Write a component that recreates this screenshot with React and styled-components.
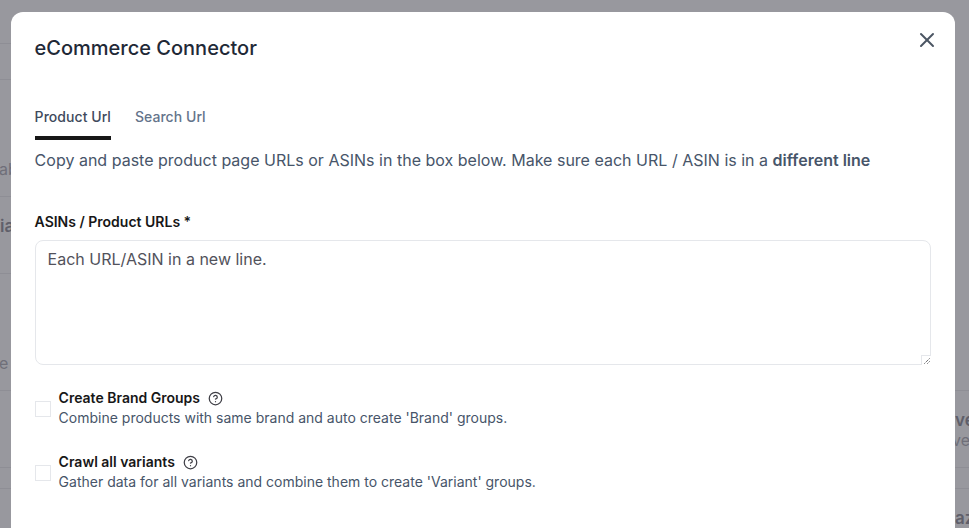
import React from 'react';
import styled, { createGlobalStyle } from 'styled-components';
import { X } from 'lucide-react';

const GlobalStyle = createGlobalStyle`
	html, body {
		margin: 0;
		height: 100%;
		overflow: hidden;
		font-family: 'Inter', 'Liberation Sans', sans-serif;
	}
	* {
		box-sizing: border-box;
	}
`;

const Page = styled.div`
	position: relative;
	width: 969px;
	height: 528px;
	overflow: hidden;
	background-color: #98989e;
`;

const Table = styled.div`
	display: flex;
	flex-direction: column;
`;

const Row = styled.div`
	display: flex;
	justify-content: space-between;
	height: ${props => props.height}px;
`;

const Edge = styled.div`
	width: ${props => (props.right ? 14 : 11)}px;
	padding-top: ${props => props.pad || 0}px;
	overflow: ${props => (props.right ? 'hidden' : 'visible')};
	border-bottom: 1px solid ${props => (props.ruled ? '#8e8e95' : 'transparent')};
	white-space: nowrap;
`;

const Strong = styled.div`
	font-size: 17px;
	line-height: 20px;
	font-weight: 600;
	color: #5f5f6a;
`;

const Faint = styled.div`
	margin-left: ${props => props.shift || 0}px;
	font-size: 16px;
	line-height: 20px;
	color: #6f6f79;
`;

const Modal = styled.div`
	position: absolute;
	left: 10.6px;
	top: 12px;
	width: 944.4px;
	height: 540px;
	background-color: white;
	border-radius: 12px;
	padding: 24px;
`;

const Title = styled.h2`
	margin: 0;
	font-size: 20px;
	line-height: 24px;
	font-weight: 500;
	color: #1f2937;
`;

const Close = styled.button`
	position: absolute;
	top: 16px;
	right: 16px;
	width: 24px;
	height: 24px;
	padding: 0;
	border: 0;
	background: none;
	color: #4b5563;
	display: flex;
`;

const Tabs = styled.div`
	display: flex;
	gap: 24px;
	margin-top: 40px;
`;

const Tab = styled.div`
	height: 40px;
	padding-top: 7px;
	font-size: 14px;
	line-height: 20px;
	font-weight: 500;
	letter-spacing: 0.05px;
	color: ${props => (props.active ? '#3f4a5c' : '#64748b')};
	border-bottom: 4px solid ${props => (props.active ? '#171717' : 'transparent')};
`;

const Intro = styled.p`
	margin: 8px 0 0;
	font-size: 16px;
	line-height: 24px;
	letter-spacing: 0.01px;
	color: #475569;
	b {
		font-weight: 600;
	}
`;

const Label = styled.div`
	margin-top: 40px;
	font-size: 14px;
	line-height: 20px;
	font-weight: 600;
	color: #171717;
`;

const AreaWrap = styled.div`
	position: relative;
	width: 896px;
	height: 125px;
	margin-top: 8px;
`;

const Area = styled.textarea`
	display: block;
	width: 100%;
	height: 100%;
	padding: 7px 12px;
	border: 1px solid #e5e7eb;
	border-radius: 8px;
	outline: none;
	resize: none;
	font-family: inherit;
	font-size: 16px;
	line-height: 22px;
	color: #52525b;
	&::placeholder {
		color: #52525b;
		opacity: 1;
	}
`;

const Grip = styled.svg`
	position: absolute;
	right: 0;
	bottom: 0;
	width: 10px;
	height: 10px;
	background-color: white;
	border-left: 1px solid #e5e7eb;
	border-top: 1px solid #e5e7eb;
`;

const Options = styled.div`
	display: flex;
	flex-direction: column;
	gap: 24px;
	margin-top: 23px;
`;

const Option = styled.div`
	display: flex;
	align-items: center;
	gap: 8px;
`;

const Box = styled.span`
	width: 16px;
	height: 16px;
	margin-top: 2px;
	border: 1px solid #e5e7eb;
	background-color: white;
`;

const OptionText = styled.div`
	display: flex;
	flex-direction: column;
`;

const OptionTitle = styled.div`
	display: flex;
	align-items: center;
	gap: 8px;
	font-size: 14px;
	line-height: 20px;
	font-weight: 600;
	color: #171717;
`;

const OptionHint = styled.div`
	font-size: 14px;
	line-height: 20px;
	color: #475569;
`;

const Help = () => (
	<svg width="15" height="15" viewBox="0 0 24 24" fill="none" stroke="#3f3f46" strokeWidth="2" strokeLinecap="round" strokeLinejoin="round">
		<circle cx="12" cy="12" r="10" />
		<path d="M9.1 9a3 3 0 0 1 5.8 1c0 2-3 3-3 3" />
		<path d="M12 17h.01" />
	</svg>
);

const options = [
	{ title: 'Create Brand Groups', hint: "Combine products with same brand and auto create 'Brand' groups." },
	{ title: 'Crawl all variants', hint: "Gather data for all variants and combine them to create 'Variant' groups." },
];

export default function App () {
	return (
		<Page>
			<GlobalStyle/>
			<Table>
				<Row height={44}><Edge ruled/><Edge right/></Row>
				<Row height={36}><Edge ruled/><Edge right/></Row>
				<Row height={117}>
					<Edge ruled pad={79}><Faint shift={-1}>ab</Faint></Edge>
					<Edge right/>
				</Row>
				<Row height={77}>
					<Edge ruled pad={19}><Strong>ia</Strong></Edge>
					<Edge right/>
				</Row>
				<Row height={117}>
					<Edge ruled pad={79}><Faint shift={-1}>e a</Faint></Edge>
					<Edge right ruled/>
				</Row>
				<Row height={77}>
					<Edge ruled/>
					<Edge right ruled pad={19}>
						<Strong>ve</Strong>
						<Faint shift={-3}>vey</Faint>
					</Edge>
				</Row>
				<Row height={21}><Edge ruled/><Edge right ruled/></Row>
				<Row height={39}>
					<Edge/>
					<Edge right pad={19}><Strong>az</Strong></Edge>
				</Row>
			</Table>
			<Modal>
				<Title>eCommerce Connector</Title>
				<Close><X size={24} strokeWidth={2}/></Close>
				<Tabs>
					<Tab active>Product Url</Tab>
					<Tab>Search Url</Tab>
				</Tabs>
				<Intro>Copy and paste product page URLs or ASINs in the box below. Make sure each URL / ASIN is in a <b>different line</b></Intro>
				<Label>ASINs / Product URLs *</Label>
				<AreaWrap>
					<Area placeholder="Each URL/ASIN in a new line."/>
					<Grip viewBox="0 0 9 9">
						<path d="M2.5 7.5l5-5M5.5 7.5l2-2" stroke="#27272a" strokeWidth="1" strokeDasharray="1 1" fill="none"/>
					</Grip>
				</AreaWrap>
				<Options>
					{options.map(option => (
						<Option key={option.title}>
							<Box/>
							<OptionText>
								<OptionTitle>{option.title}<Help/></OptionTitle>
								<OptionHint>{option.hint}</OptionHint>
							</OptionText>
						</Option>
					))}
				</Options>
			</Modal>
		</Page>
	);
}
